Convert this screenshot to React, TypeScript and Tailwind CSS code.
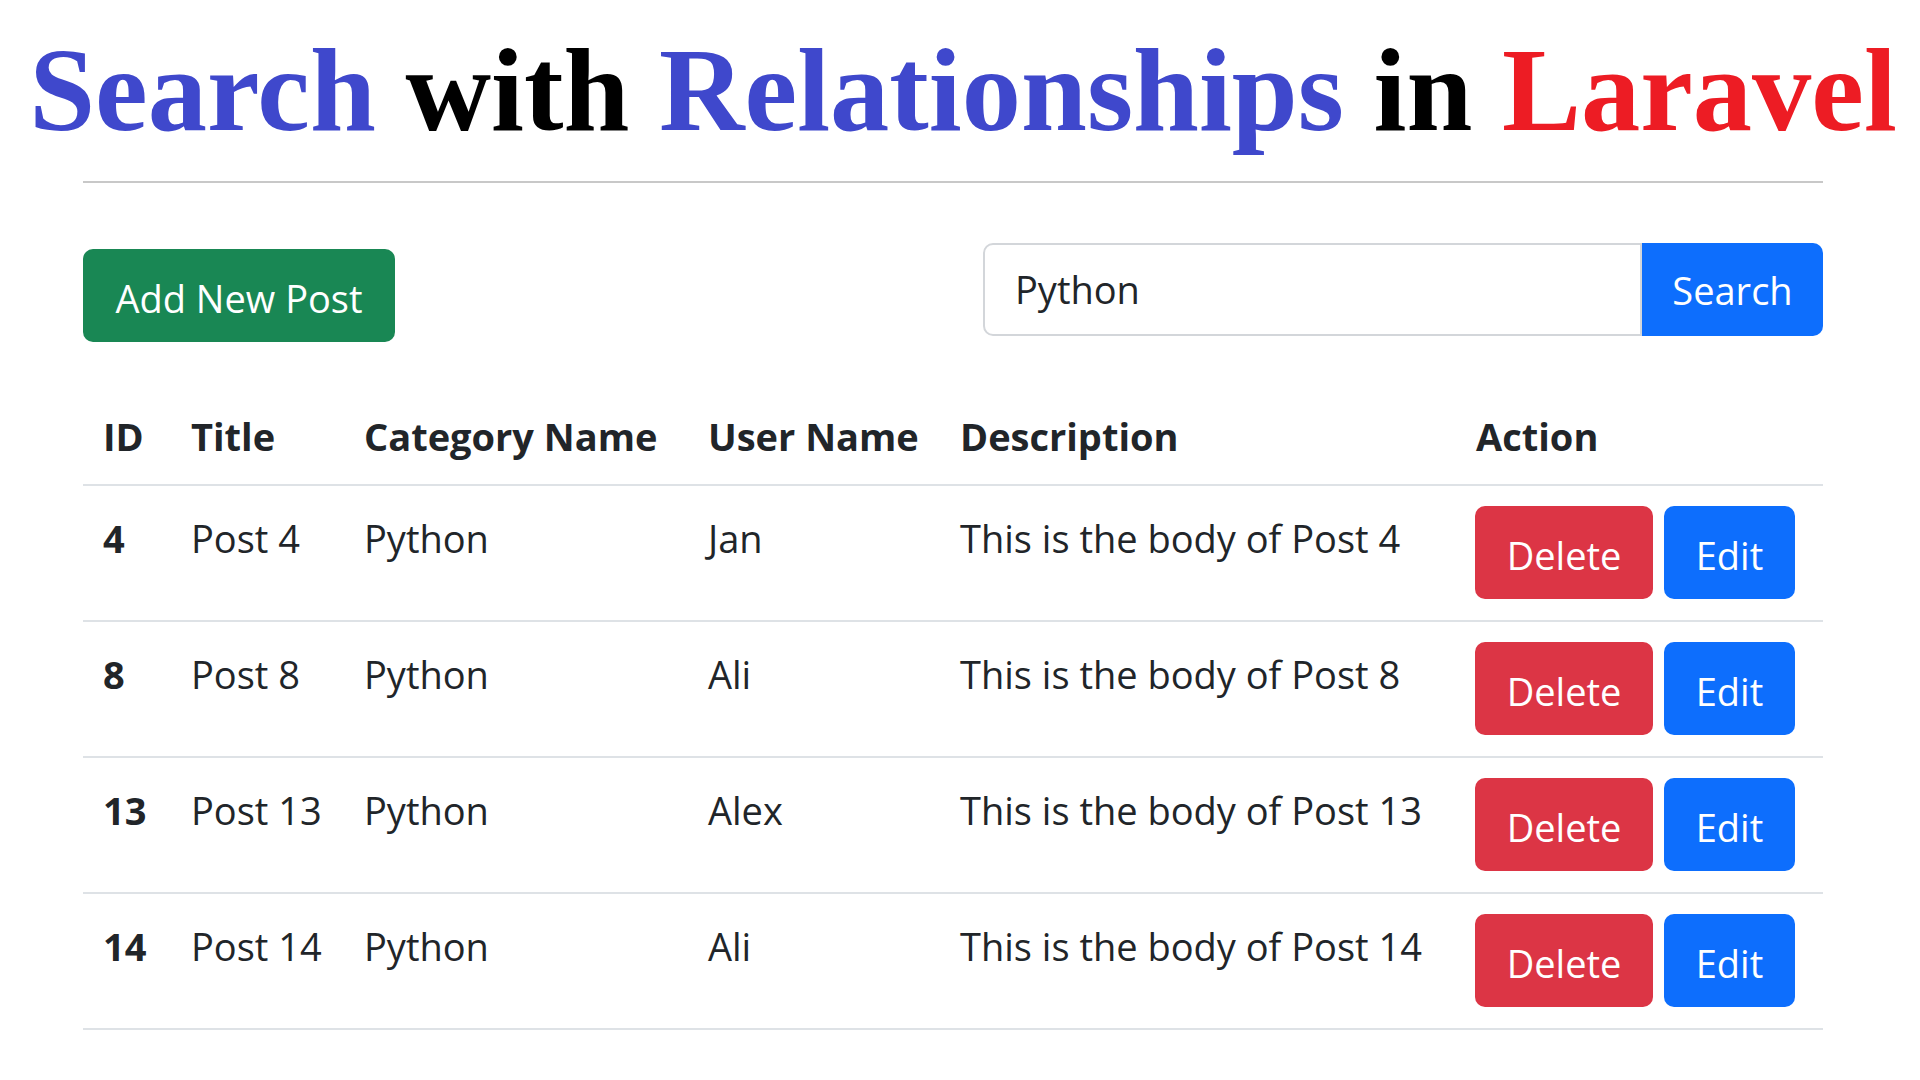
import { useState } from 'react';

const posts = [
  { id: 4, title: 'Post 4', category: 'Python', user: 'Jan', body: 'This is the body of Post 4' },
  { id: 8, title: 'Post 8', category: 'Python', user: 'Ali', body: 'This is the body of Post 8' },
  { id: 13, title: 'Post 13', category: 'Python', user: 'Alex', body: 'This is the body of Post 13' },
  { id: 14, title: 'Post 14', category: 'Python', user: 'Ali', body: 'This is the body of Post 14' },
];

const cols = 'grid grid-cols-[88px_173px_344px_252px_516px_1fr]';

const App = () => {
  const [query, setQuery] = useState('Python');

  return (
    <div className="min-h-screen bg-white text-[#212529] font-['Open_Sans',sans-serif]">
      <h1 className="pt-[31px] pl-[6px] text-center text-[118.5px] leading-none font-bold font-['Liberation_Serif','Times_New_Roman',serif] whitespace-nowrap">
        <span className="text-[#3f48cc]">Search</span>{' '}
        <span className="text-black">with</span>{' '}
        <span className="text-[#3f48cc]">Relationships</span>{' '}
        <span className="text-black">in</span>{' '}
        <span className="text-[#ed1c24]">Laravel</span>
      </h1>

      <div className="ml-[83px] w-[1740px]">
        <div className="mt-[31px] h-[2px] bg-[#c8c8c8]"></div>

        <div className="mt-[60px] flex items-start justify-between">
          <button className="mt-[6px] h-[93px] w-[312px] rounded-[10px] bg-[#198754] pt-[7px] text-[38px] leading-[57px] text-white">
            Add New Post
          </button>

          <div className="flex h-[93px] w-[840px]">
            <input
              value={query}
              onChange={(e) => setQuery(e.target.value)}
              className="h-full flex-1 rounded-l-[10px] border-2 border-[#d3d6da] pl-[30px] text-[38px] text-[#212529] outline-none"
            />
            <button className="h-full w-[181px] rounded-r-[10px] bg-[#0d6efd] pt-[3px] text-[38px] leading-[57px] text-white">
              Search
            </button>
          </div>
        </div>

        <div className="mt-[44px]">
          <div className={`${cols} border-b-2 border-[#dee2e6] text-[38px] leading-[57px] font-bold`}>
            {['ID', 'Title', 'Category Name', 'User Name', 'Description', 'Action'].map((h) => (
              <div key={h} className="px-[20px] pt-[22px] pb-[19px] whitespace-nowrap">{h}</div>
            ))}
          </div>

          {posts.map((p) => (
            <div key={p.id} className={`${cols} border-b-2 border-[#dee2e6] text-[38px] leading-[57px]`}>
              <div className="px-[20px] pt-[24px] font-bold">{p.id}</div>
              <div className="px-[20px] pt-[24px] whitespace-nowrap">{p.title}</div>
              <div className="px-[20px] pt-[24px]">{p.category}</div>
              <div className="px-[20px] pt-[24px]">{p.user}</div>
              <div className="px-[20px] pt-[24px] whitespace-nowrap">{p.body}</div>
              <div className="flex gap-[11px] px-[19px] pt-[20px] pb-[21px]">
                <button className="h-[93px] w-[178px] rounded-[10px] bg-[#dc3545] pt-[7px] text-white">Delete</button>
                <button className="h-[93px] w-[131px] rounded-[10px] bg-[#0d6efd] pt-[7px] text-white">Edit</button>
              </div>
            </div>
          ))}
        </div>
      </div>
    </div>
  );
};

export default App;
